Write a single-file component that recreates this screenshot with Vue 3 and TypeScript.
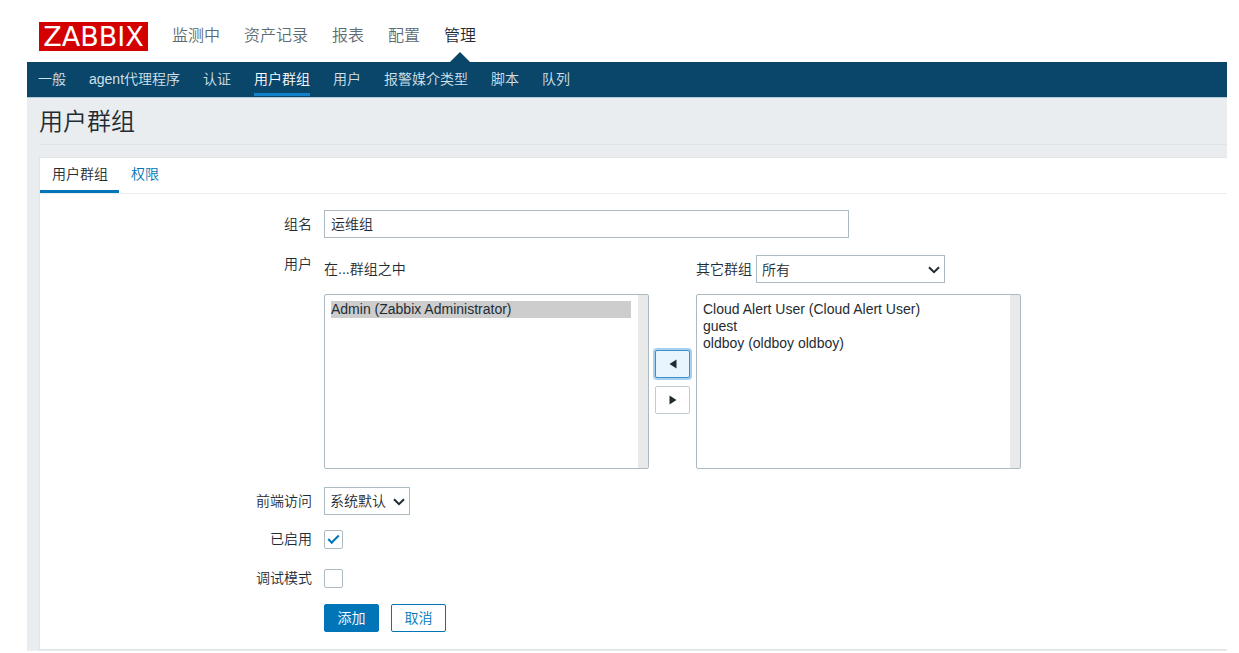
<script setup lang="ts">
import { ref } from 'vue'

const mainMenu: string[] = ['监测中', '资产记录', '报表', '配置', '管理']
const activeMain = '管理'

const subMenu: string[] = ['一般', 'agent代理程序', '认证', '用户群组', '用户', '报警媒介类型', '脚本', '队列']
const activeSub = '用户群组'

const groupName = ref('运维组')
const members = ref<string[]>(['Admin (Zabbix Administrator)'])
const others = ref<string[]>(['Cloud Alert User (Cloud Alert User)', 'guest', 'oldboy (oldboy oldboy)'])
const selectedMembers = ref<string[]>(['Admin (Zabbix Administrator)'])
const selectedOthers = ref<string[]>([])
const enabled = ref(true)
const debugMode = ref(false)

function addMembers(): void {
  members.value = [...members.value, ...selectedOthers.value]
  others.value = others.value.filter((u) => !selectedOthers.value.includes(u))
  selectedOthers.value = []
}

function removeMembers(): void {
  others.value = [...others.value, ...selectedMembers.value]
  members.value = members.value.filter((u) => !selectedMembers.value.includes(u))
  selectedMembers.value = []
}
</script>

<template>
  <div class="page">
    <header class="top">
      <a class="logo" href="#">ZABBIX</a>
      <nav class="main-nav">
        <a v-for="item in mainMenu" :key="item" href="#" :class="{ active: item === activeMain }">{{ item }}</a>
      </nav>
    </header>
    <nav class="sub-nav">
      <a v-for="item in subMenu" :key="item" href="#" :class="{ active: item === activeSub }">{{ item }}</a>
    </nav>
    <main class="content">
      <h1>用户群组</h1>
      <section class="card">
        <div class="tabs">
          <a href="#" class="active">用户群组</a>
          <a href="#">权限</a>
        </div>
        <form class="form" @submit.prevent>
          <label class="label" for="name">组名</label>
          <input id="name" v-model="groupName" class="text" type="text" />

          <label class="label short" for="members">用户</label>
          <div class="transfer">
            <div class="head">在...群组之中</div>
            <div class="head other">
              <label for="other-group">其它群组</label>
              <span class="drop wide">
                <select id="other-group"><option>所有</option></select>
                <svg width="12" height="8" viewBox="0 0 12 8"><path d="M1 1.2l5 5 5-5" /></svg>
              </span>
            </div>
            <select id="members" v-model="selectedMembers" class="list" multiple>
              <option v-for="u in members" :key="u" :value="u">{{ u }}</option>
            </select>
            <div class="movers">
              <button type="button" class="mover focused" aria-label="添加用户" @click="addMembers">
                <svg width="8" height="10" viewBox="0 0 8 10"><path d="M7.5 .5v9L.5 5z" /></svg>
              </button>
              <button type="button" class="mover" aria-label="移除用户" @click="removeMembers">
                <svg width="8" height="10" viewBox="0 0 8 10"><path d="M.5 .5v9L7.5 5z" /></svg>
              </button>
            </div>
            <select v-model="selectedOthers" class="list" multiple aria-label="其它群组用户">
              <option v-for="u in others" :key="u" :value="u">{{ u }}</option>
            </select>
          </div>

          <label class="label" for="access">前端访问</label>
          <span class="drop">
            <select id="access"><option>系统默认</option></select>
            <svg width="12" height="8" viewBox="0 0 12 8"><path d="M1 1.2l5 5 5-5" /></svg>
          </span>

          <label class="label short" for="enabled">已启用</label>
          <input id="enabled" v-model="enabled" class="check spaced" type="checkbox" />

          <label class="label short" for="debug">调试模式</label>
          <input id="debug" v-model="debugMode" class="check" type="checkbox" />

          <div class="actions">
            <button type="submit" class="btn primary">添加</button>
            <button type="button" class="btn">取消</button>
          </div>
        </form>
      </section>
    </main>
  </div>
</template>

<style>
body {
  margin: 0;
  background: #fff;
}
</style>

<style scoped>
.page {
  padding: 0 12px 2px 27px;
  font: 350 14px/20px "Liberation Sans", "Noto Sans CJK SC", sans-serif;
  color: #1f2c33;
}
.page * {
  box-sizing: border-box;
}
a {
  text-decoration: none;
}
input,
select,
button {
  margin: 0;
  font: inherit;
  color: inherit;
}
.top {
  display: flex;
  align-items: center;
  gap: 24px;
  height: 62px;
  padding: 11px 12px 0;
}
.logo {
  width: 109px;
  height: 29px;
  background: #d40000;
  color: #fff;
  font: 400 27px/29px "DejaVu Sans", sans-serif;
  text-align: center;
}
.main-nav {
  display: flex;
  align-self: stretch;
  gap: 24px;
  font-size: 16px;
}
.main-nav a {
  display: flex;
  flex-direction: column;
  align-items: center;
  justify-content: space-between;
  padding-top: 15px;
  color: #5d6b73;
}
.main-nav a.active {
  color: #1f2c33;
}
.main-nav a.active::after {
  content: "";
  border: 10px solid transparent;
  border-top: 0;
  border-bottom-color: #0a466a;
}
.sub-nav {
  display: flex;
  gap: 23px;
  height: 36px;
  padding: 0 11px;
  background: #0a466a;
  border-bottom: 1px solid #b3c8d9;
}
.sub-nav a {
  height: 34px;
  line-height: 34px;
  color: #d3e0e9;
  white-space: nowrap;
}
.sub-nav a.active {
  color: #fff;
  border-bottom: 3px solid #1380cb;
}
.content {
  padding: 0 0 1px 12px;
  background: #e9edf0;
}
h1 {
  margin: 0 0 12px;
  height: 47px;
  border-bottom: 1px solid #dfe4e7;
  font-size: 24px;
  font-weight: 350;
  line-height: 48px;
}
.card {
  background: #fff;
  border: 1px solid #dfe4e7;
  border-right: 0;
}
.tabs {
  display: flex;
  height: 36px;
  border-bottom: 1px solid #ebeef0;
}
.tabs a {
  height: 35px;
  padding: 0 11px 0 12px;
  line-height: 33px;
  color: #0275b8;
}
.tabs a.active {
  color: #1f2c33;
  border-bottom: 3px solid #0275b8;
}
.form {
  display: grid;
  grid-template-columns: 272px 1fr;
  gap: 15px 12px;
  align-items: start;
  justify-items: start;
  padding: 16px 0 17px;
}
.label {
  justify-self: end;
  line-height: 28px;
}
.label.short {
  line-height: 18px;
}
.text {
  width: 525px;
  max-width: 100%;
  height: 28px;
  margin-bottom: 2px;
  padding: 0 6px 2px;
  border: 1px solid #acbbc2;
  background: #fff;
}
.transfer {
  display: grid;
  grid-template-columns: 325px 35px 325px;
  gap: 11px 6px;
  padding-bottom: 3px;
}
.head {
  line-height: 28px;
}
.other {
  display: flex;
  grid-column: 3;
  gap: 4px;
}
.drop {
  display: block;
  position: relative;
  width: 86px;
}
.drop.wide {
  width: 189px;
}
.drop select {
  display: block;
  appearance: none;
  width: 100%;
  height: 28px;
  padding: 0 5px;
  border: 1px solid #acbbc2;
  border-radius: 0;
  background: #fff;
}
.drop svg {
  position: absolute;
  top: 11px;
  right: 5px;
  fill: none;
  stroke: #1f2c33;
  stroke-width: 2;
  pointer-events: none;
}
.list {
  height: 175px;
  padding: 6px 17px 6px 6px;
  border: 1px solid #acbbc2;
  border-radius: 2px;
  background: linear-gradient(#e9e9e9, #e9e9e9) right / 10px 100% no-repeat #fff;
  overflow-y: auto;
  outline: 0;
}
.list option {
  min-height: 17px;
  padding: 0;
  line-height: 17px;
}
.list option:checked {
  background: #cdcdcd linear-gradient(#cdcdcd, #cdcdcd);
  color: #1f2c33;
}
.movers {
  display: flex;
  flex-direction: column;
  justify-content: center;
  gap: 8px;
}
.mover {
  display: flex;
  align-items: center;
  justify-content: center;
  height: 28px;
  padding: 0;
  border: 1px solid #c0ccd2;
  border-radius: 2px;
  background: #fff;
  fill: #1f2c33;
}
.mover.focused {
  border-color: #3f8fc4;
  background: #e8f5ff;
  box-shadow: 0 0 0 2px #a6d0f2;
}
.check {
  display: flex;
  align-items: center;
  justify-content: center;
  appearance: none;
  width: 19px;
  height: 19px;
  margin-bottom: 1px;
  border: 1px solid #acbbc2;
  border-radius: 2px;
  background: #fff;
}
.check.spaced {
  margin-bottom: 5px;
}
.check:checked::after {
  content: "";
  box-sizing: border-box;
  width: 11px;
  height: 6px;
  margin-bottom: 3px;
  border: solid #0275b8;
  border-width: 0 0 2px 2px;
  transform: rotate(-45deg);
}
.actions {
  grid-column: 2;
  display: flex;
  gap: 12px;
}
.btn {
  width: 55px;
  height: 28px;
  padding: 0;
  border: 1px solid #0275b8;
  border-radius: 2px;
  background: #fff;
  color: #0275b8;
}
.btn.primary {
  background: #0275b8;
  color: #fff;
}
</style>
